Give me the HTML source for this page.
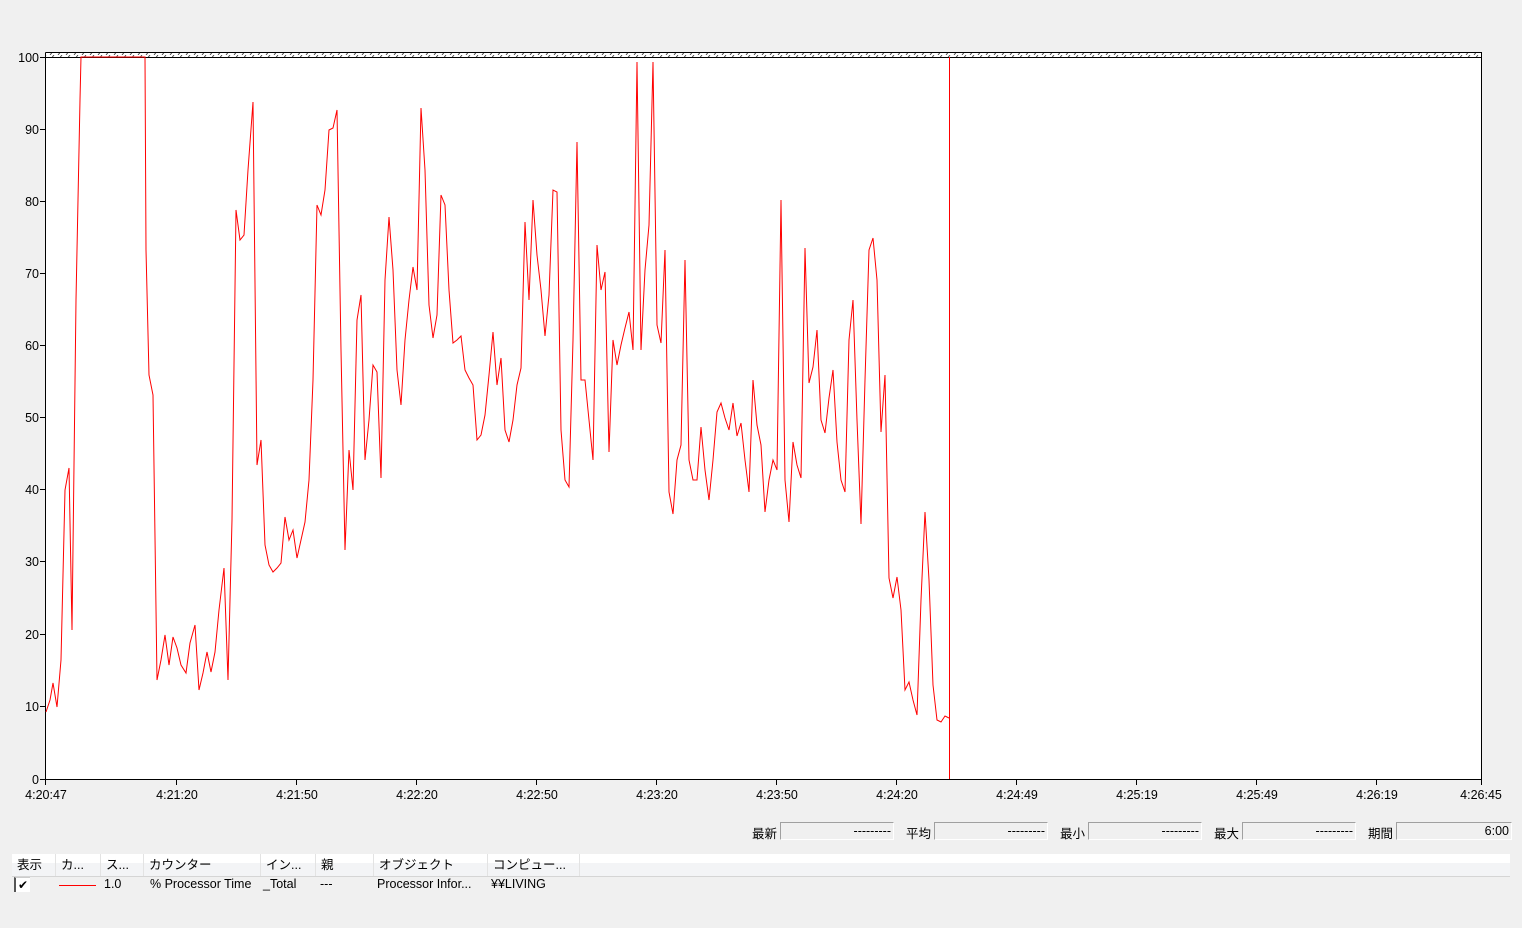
<!DOCTYPE html><html><head><meta charset="utf-8"><style>
body{margin:0;width:1522px;height:928px;background:#f0f0f0;overflow:hidden;font-family:"Liberation Sans","Noto Sans CJK JP",sans-serif;font-size:12.5px;color:#000;position:relative}
.a{position:absolute;white-space:nowrap}
.box{position:absolute;height:18px;border:1px solid #a0a0a0;border-right-color:#fff;border-bottom-color:#fff;background:#f0f0f0;text-align:right;line-height:17px;padding-right:2px;box-sizing:border-box}
.hd{position:absolute;left:12px;top:854px;width:1498px;height:22px;background:linear-gradient(#fff 0,#fff 40%,#f3f4f6 41%,#f3f4f6 100%);border-bottom:1px solid #d5d5d5}
.hd span{position:absolute;top:0;height:22px;line-height:22px;padding-left:5px;border-right:1px solid #e3e3e3;box-sizing:border-box}
</style></head><body>
<svg class="a" style="left:0;top:0" width="1522" height="820">
<defs><pattern id="h" width="8" height="5" patternUnits="userSpaceOnUse"><path d="M2 5L6 0" stroke="#404040" stroke-width="0.9"/></pattern></defs>
<rect x="46" y="52" width="1435" height="727" fill="#fff"/>
<rect x="46" y="53" width="1435" height="4" fill="url(#h)"/>
<path d="M45.5 52.5H1481.5V779.5M45.5 52.5V779.5H1481.5M45.5 57.5H1481.5" fill="none" stroke="#000"/>
<g stroke="#000">
<path d="M40 57.5h6M40 129.5h6M40 201.5h6M40 273.5h6M40 345.5h6M40 417.5h6M40 489.5h6M40 561.5h6M40 634.5h6M40 706.5h6M40 779.5h6"/>
<path d="M45.5 779v6M176.5 779v6M296.5 779v6M416.5 779v6M536.5 779v6M656.5 779v6M776.5 779v6M896.5 779v6M1016.5 779v6M1136.5 779v6M1256.5 779v6M1376.5 779v6M1481.5 779v6"/>
</g>
<g font-size="12.5" text-anchor="end" fill="#000">
<text x="39" y="62">100</text><text x="39" y="134">90</text><text x="39" y="206">80</text><text x="39" y="278">70</text><text x="39" y="350">60</text><text x="39" y="422">50</text><text x="39" y="494">40</text><text x="39" y="566">30</text><text x="39" y="639">20</text><text x="39" y="711">10</text><text x="39" y="784">0</text>
</g>
<g font-size="12.5" text-anchor="middle">
<text x="46" y="799">4:20:47</text><text x="177" y="799">4:21:20</text><text x="297" y="799">4:21:50</text><text x="417" y="799">4:22:20</text><text x="537" y="799">4:22:50</text><text x="657" y="799">4:23:20</text><text x="777" y="799">4:23:50</text><text x="897" y="799">4:24:20</text><text x="1017" y="799">4:24:49</text><text x="1137" y="799">4:25:19</text><text x="1257" y="799">4:25:49</text><text x="1377" y="799">4:26:19</text><text x="1481" y="799">4:26:45</text>
</g>
<polyline fill="none" stroke="#f00" stroke-width="1" points="46,712 50,700 53,683 57,707 61,660 65,490 69,468 72,630 76,300 80,100 81,57 145,57 146,250 149,375 153,395 157,680 161,660 165,635 169,665 173,637 177,648 181,665 186,673 190,643 195,625 199,690 203,673 207,652 211,672 215,652 219,610 224,568 228,680 232,520 236,210 240,240 244,235 248,170 253,102 257,465 261,440 265,545 269,565 273,572 277,568 281,563 285,517 289,540 293,530 297,558 301,540 305,522 309,480 313,380 317,205 321,215 325,190 329,130 333,128 337,110 341,350 345,550 349,450 353,490 357,320 361,295 365,460 369,420 373,365 377,372 381,478 385,280 389,217 393,270 397,370 401,405 405,340 409,300 413,267 417,290 421,108 425,170 429,305 433,338 437,315 441,195 445,205 449,290 453,343 457,340 461,336 465,370 469,378 473,385 477,440 481,435 485,415 489,375 493,332 497,385 501,358 505,430 509,442 513,420 517,385 521,368 525,222 529,300 533,200 537,255 541,290 545,336 549,295 553,190 557,192 561,430 565,480 569,487 573,340 577,142 581,380 585,380 589,420 593,460 597,245 601,290 605,272 609,452 613,340 617,365 621,345 625,328 629,312 633,350 637,62 641,350 645,270 649,225 653,62 657,325 661,343 665,250 669,492 673,514 677,460 681,445 685,260 689,460 693,480 697,480 701,427 705,470 709,500 713,460 717,412 721,403 725,418 729,430 733,403 737,436 741,423 745,460 749,492 753,380 757,425 761,445 765,512 769,480 773,460 777,470 781,200 785,480 789,522 793,442 797,465 801,478 805,248 809,383 813,367 817,330 821,420 825,433 829,398 833,370 837,442 841,480 845,492 849,340 853,300 857,420 861,524 865,380 869,250 873,238 877,280 881,432 885,375 889,578 893,598 897,577 901,610 905,690 909,682 913,700 917,715 921,600 925,512 929,580 933,685 937,720 941,722 945,716 949,718"/>
<path d="M949.5 57V779" stroke="#f00"/>
</svg>
<div class="a" style="left:752px;top:823px">最新</div><div class="box" style="left:780px;top:822px;width:114px">---------</div>
<div class="a" style="left:906px;top:823px">平均</div><div class="box" style="left:934px;top:822px;width:114px">---------</div>
<div class="a" style="left:1060px;top:823px">最小</div><div class="box" style="left:1088px;top:822px;width:114px">---------</div>
<div class="a" style="left:1214px;top:823px">最大</div><div class="box" style="left:1242px;top:822px;width:114px">---------</div>
<div class="a" style="left:1368px;top:823px">期間</div><div class="box" style="left:1396px;top:822px;width:116px">6:00</div>
<div class="hd">
<span style="left:0;width:44px">表示</span><span style="left:44px;width:45px">カ...</span><span style="left:89px;width:43px">ス...</span><span style="left:132px;width:117px">カウンター</span><span style="left:249px;width:55px">イン...</span><span style="left:304px;width:58px">親</span><span style="left:362px;width:114px">オブジェクト</span><span style="left:476px;width:92px">コンピュー...</span>
</div>
<div class="a" style="left:14px;top:877px;width:14px;height:14px;background:#fff;border-left:2px solid #555;border-top:1px solid #ccc;font-size:12px;line-height:14px;text-align:center">✔</div>
<div class="a" style="left:59px;top:885px;width:37px;height:1px;background:#f00"></div>
<div class="a" style="left:104px;top:877px">1.0</div>
<div class="a" style="left:150px;top:877px">% Processor Time</div>
<div class="a" style="left:263px;top:877px">_Total</div>
<div class="a" style="left:320px;top:877px">---</div>
<div class="a" style="left:377px;top:877px">Processor Infor...</div>
<div class="a" style="left:491px;top:877px">¥¥LIVING</div>
</body></html>
